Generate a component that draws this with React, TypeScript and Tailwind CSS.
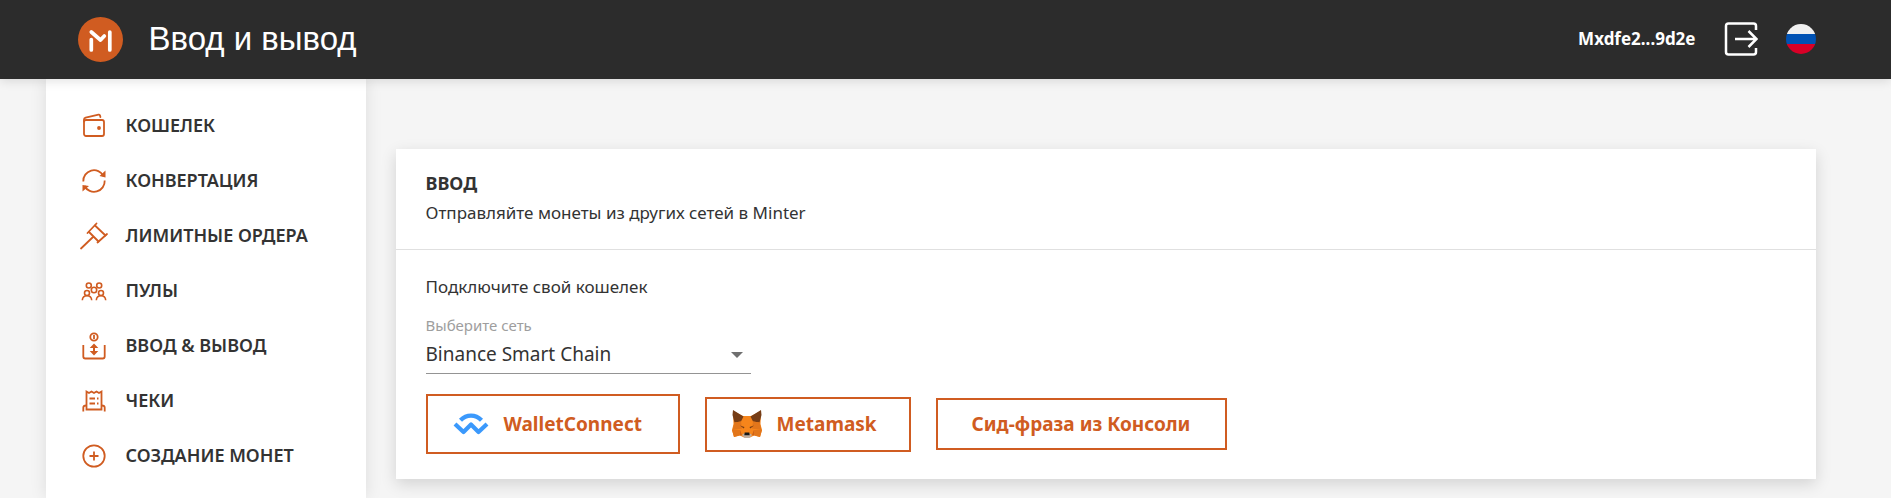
import { useState } from "react";
import type { ReactNode } from "react";

const iconProps = {
  viewBox: "0 0 30 30",
  fill: "none",
  stroke: "currentColor",
  strokeWidth: 1.8,
  className: "h-[30px] w-[30px] shrink-0",
  "aria-hidden": true,
};

function WalletIcon() {
  return (
    <svg {...iconProps} strokeLinejoin="round" strokeLinecap="round">
      <rect x={5} y={9} width={20} height={16} rx={2} />
      <path d="M5 10.500V8.500c0-1 .6-1.500 1.600-1.800L19.500 3.700c.8-.2 1.400.2 1.600 1l.3 1.300" />
      <circle cx={20} cy={17} r={1} fill="currentColor" />
    </svg>
  );
}

function ConvertIcon() {
  return (
    <svg {...iconProps}>
      <path d="M4.300 15.500A10.700 10.700 0 0 1 24.500 10" />
      <path d="M25.700 14.500A10.700 10.700 0 0 1 5.500 20" />
      <path d="M26.500 4.500v7l-6-1.500zM3.500 25.500v-6.500l6.500 1z" fill="currentColor" stroke="none" />
    </svg>
  );
}

function GavelIcon() {
  return (
    <svg {...iconProps} strokeLinecap="round">
      <path d="M8.500 12l9-9.500M18.500 21.500L28 13" />
      <path d="M16 4.500l10.500 10M10 11l9.500 9.500M14 16L2 27.500" />
    </svg>
  );
}

function PoolsIcon() {
  return (
    <svg {...iconProps} strokeWidth={1.600}>
      <circle cx={9.800} cy={9.500} r={2.500} />
      <circle cx={20.200} cy={9.500} r={2.500} />
      <circle cx={15} cy={14} r={2.700} />
      <circle cx={8} cy={17} r={2.500} />
      <circle cx={22} cy={17} r={2.500} />
      <path d="M3.300 24.300c.4-6 9-6 9.400 0M17.300 24.300c.4-6 9-6 9.400 0" />
    </svg>
  );
}

function DepositIcon() {
  return (
    <svg {...iconProps}>
      <circle cx={15} cy={6} r={3.700} />
      <path d="M15 4v4" />
      <path d="M4.300 14v11.500c0 1.500.7 2 2 2h17.400c1.300 0 2-.5 2-2V14" />
      <path d="M15 15v7" strokeWidth={2} />
      <path d="M10.700 17L15 12.500l4.300 4.500zM10.700 20l4.300 4.500 4.300-4.500z" fill="currentColor" stroke="none" />
    </svg>
  );
}

function ChecksIcon() {
  return (
    <svg {...iconProps}>
      <path d="M7.500 23.500V5.500l2.500 1.500 2.500-1.500L15 7l2.500-1.500L20 7l2.500-1.500v18z" />
      <path d="M4.300 25.500v-4c0-1.200.8-2 3-2M25.700 25.500v-4c0-1.200-.8-2-3-2" />
      <path d="M10.500 12.500h5.500M18 12.500h1.500M10.500 17.500h5.500M18 17.500h1.500" />
    </svg>
  );
}

function PlusIcon() {
  return (
    <svg {...iconProps}>
      <circle cx={15} cy={15} r={10.700} />
      <path d="M15 10.500v9M10.500 15h9" />
    </svg>
  );
}

function LogoIcon() {
  return (
    <svg viewBox="0 0 45 45" className="h-[45px] w-[45px]" aria-hidden="true">
      <circle cx={22.500} cy={22.500} r={22.500} fill="#D05C21" />
      <g fill="none" stroke="#fff" strokeWidth={3.700} strokeLinecap="round" strokeLinejoin="round">
        <path d="M13.300 22.500v10.500M31.800 15v18M13.300 15l9.200 8 3.800-4" />
      </g>
    </svg>
  );
}

function LogoutIcon() {
  return (
    <svg
      viewBox="0 0 34 34"
      fill="none"
      stroke="currentColor"
      strokeWidth={2.500}
      className="h-[34px] w-[34px]"
      aria-hidden="true"
    >
      <path d="M32 8V4c0-1.500-.7-2.500-2.500-2.500h-25C2.700 1.500 2 2.500 2 4v26c0 1.500.7 2.500 2.500 2.500h25c1.800 0 2.500-1 2.500-2.500v-4" />
      <path d="M11 17h21M24.500 9l8 8-8 8" />
    </svg>
  );
}

function FlagIcon() {
  return (
    <svg viewBox="0 0 30 30" className="h-[30px] w-[30px] rounded-full" aria-hidden="true">
      <path fill="#F0F0F0" d="M0 0h30v10H0z" />
      <path fill="#0052B4" d="M0 10h30v10H0z" />
      <path fill="#D80027" d="M0 20h30v10H0z" />
    </svg>
  );
}

function WalletConnectIcon() {
  return (
    <svg viewBox="0 0 36 22" className="h-[22px] w-9" aria-hidden="true">
      <g fill="none" stroke="#3B99FC" strokeWidth={4.200} strokeLinejoin="round">
        <path d="M7.500 7.300C13.500 1 22.500 1 28.500 7.300" />
        <path d="M2 11l8.500 8L18 11.500l7.500 7.500L34 11" />
      </g>
    </svg>
  );
}

function MetamaskIcon() {
  return (
    <svg viewBox="0 0 30 28" className="h-7 w-[30px]" aria-hidden="true">
      <path fill="#F6851B" d="M1 1l10 5h8l10-5-.5 13L30 20l-2 7-6-1.500-4 2h-6l-4-2L2 27l-2-7 1.500-6z" />
      <path fill="#763D16" d="M1 0l10.500 6.500-2.500 5-6.500 1L.5 5zM29 0L18.500 6.500l2.500 5 6.500 1L29.500 5z" />
      <path fill="#E2761B" d="M2.500 12.500L9 11.500l1 7-9.500 1.500zM27.500 12.500l-6.500-1-1 7 9.500 1.500zM0 20h8l1 5-7 2zM30 20h-8l-1 5 7 2z" />
      <path fill="#CD6116" d="M8 20l2 5-2 .5zM22 20l-2 5 2 .5z" />
      <path fill="#763D16" d="M8 15.500l4.500 1.500-.8 1.600zM22 15.500L17.500 17l.8 1.600z" />
      <path fill="#C0AD9E" d="M10 25l2-1.500h6l2 1.500-2.500 3h-5z" />
      <path fill="#161616" d="M12.700 22.500h4.600l.4 2.800h-5.400z" />
    </svg>
  );
}

const menu = [
  { title: "КОШЕЛЕК", icon: <WalletIcon /> },
  { title: "КОНВЕРТАЦИЯ", icon: <ConvertIcon /> },
  { title: "ЛИМИТНЫЕ ОРДЕРА", icon: <GavelIcon /> },
  { title: "ПУЛЫ", icon: <PoolsIcon /> },
  { title: "ВВОД & ВЫВОД", icon: <DepositIcon /> },
  { title: "ЧЕКИ", icon: <ChecksIcon /> },
  { title: "СОЗДАНИЕ МОНЕТ", icon: <PlusIcon /> },
];

function Header() {
  return (
    <header className="relative z-10 bg-[#2C2C2C] text-white shadow-[0_2px_10px_rgba(0,0,0,0.12)]">
      <div className="mx-auto flex h-[79px] max-w-[1800px] items-center pb-px pl-8 pr-[30px]">
        <a href="#" aria-label="Minter">
          <LogoIcon />
        </a>
        <h1 className="ml-[26px] font-['Liberation_Sans',sans-serif] text-[33px] leading-10">Ввод и вывод</h1>
        <span className="ml-auto text-[17px] font-bold">Mxdfe2...9d2e</span>
        <button type="button" aria-label="Выйти" className="ml-7">
          <LogoutIcon />
        </button>
        <button type="button" aria-label="Русский" className="ml-7">
          <FlagIcon />
        </button>
      </div>
    </header>
  );
}

function Sidebar() {
  return (
    <nav className="w-[320px] shrink-0 bg-white pt-[19px] shadow-[0_0_16px_rgba(0,0,0,0.1)]">
      <ul>
        {menu.map((item) => (
          <li key={item.title}>
            <a href="#" className="flex h-[55px] items-center gap-[17px] pl-[33px] text-[18px] font-semibold">
              <span className="text-[#D05C21]">{item.icon}</span>
              <span>{item.title}</span>
            </a>
          </li>
        ))}
      </ul>
    </nav>
  );
}

function WalletButton({ className, children }: { className: string; children: ReactNode }) {
  return (
    <button
      type="button"
      className={`flex items-center border-2 border-[#D05C21] text-[19px] font-bold text-[#D05C21] ${className}`}
    >
      {children}
    </button>
  );
}

export default function App() {
  const [network, setNetwork] = useState("bsc");

  return (
    <div className="flex min-h-screen flex-col bg-[#F5F5F5] font-['Noto_Sans',sans-serif] text-[#333333]">
      <Header />
      <div className="mx-auto flex w-full max-w-[1800px] flex-1">
        <Sidebar />
        <main className="flex-1 px-[30px] pt-[70px]">
          <section className="bg-white shadow-[0_5px_15px_rgba(0,0,0,0.14)]">
            <div className="border-b border-[#E0E0E0] px-[30px] pb-[22px] pt-5">
              <h2 className="text-[18px] font-bold leading-[29px]">ВВОД</h2>
              <p className="text-[17px] leading-[29px]">Отправляйте монеты из других сетей в Minter</p>
            </div>
            <div className="px-[30px] pb-[25px] pt-[22px]">
              <p className="text-[17px] leading-[29px]">Подключите свой кошелек</p>
              <div className="mt-3.5 w-[325px]">
                <label htmlFor="network" className="block text-[15px] leading-5 text-[#9E9E9E]">
                  Выберите сеть
                </label>
                <div className="relative">
                  <select
                    id="network"
                    value={network}
                    onChange={(event) => setNetwork(event.target.value)}
                    className="h-[39px] w-full appearance-none border-b border-[#949494] bg-transparent text-[19px] outline-none"
                  >
                    <option value="bsc">Binance Smart Chain</option>
                    <option value="eth">Ethereum</option>
                  </select>
                  <svg
                    viewBox="0 0 12 6"
                    className="pointer-events-none absolute right-2 top-[17px] h-1.5 w-3 fill-[#6F6F6F]"
                    aria-hidden="true"
                  >
                    <path d="M0 0h12L6 6z" />
                  </svg>
                </div>
              </div>
              <div className="mt-5 flex flex-wrap items-center gap-[25px]">
                <WalletButton className="h-[60px] w-[254px] gap-[15px] pl-[25px]">
                  <WalletConnectIcon />
                  WalletConnect
                </WalletButton>
                <WalletButton className="h-[55px] w-[206px] gap-[15px] pl-[25px]">
                  <MetamaskIcon />
                  Metamask
                </WalletButton>
                <WalletButton className="h-[52px] w-[291px] justify-center">Сид-фраза из Консоли</WalletButton>
              </div>
            </div>
          </section>
        </main>
      </div>
    </div>
  );
}
